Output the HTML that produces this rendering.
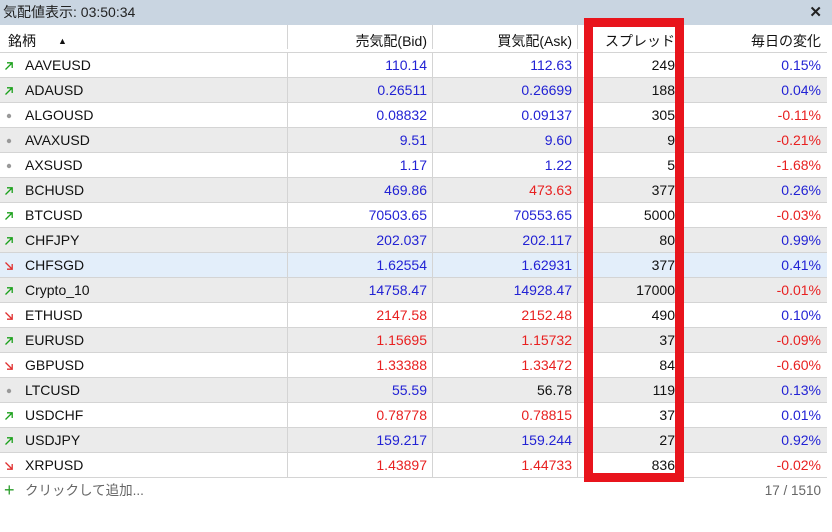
<!DOCTYPE html>
<html><head><meta charset="utf-8"><style>
*{margin:0;padding:0;box-sizing:border-box}
body{width:832px;height:532px;background:#fff;font-family:"Liberation Sans","Noto Sans CJK JP",sans-serif;font-size:14px;color:#111;position:relative;overflow:hidden}
.title{position:absolute;left:0;top:0;width:832px;height:25px;background:#c9d5e1;font-size:14px;line-height:25px;padding-left:3px;color:#222}
.x{position:absolute;right:10px;top:0;font-weight:bold;font-size:15px}
.row{position:absolute;left:0;width:827px;height:25px;border-bottom:1px solid #d4d4d4;line-height:24px}
.row.g{background:#ebebeb}
.row.h{background:#e3eefa}
.c{position:absolute;top:0;height:24px;text-align:right;border-left:1px solid #d4d4d4}
.c1{left:287px;width:145px;padding-right:5px}
.c2{left:432px;width:145px;padding-right:5px}
.c3{left:577px;width:103px;padding-right:5px}
.c4{left:680px;width:147px;padding-right:6px}
.s{position:absolute;left:25px;top:0}
.i{position:absolute;left:3px;top:0;width:12px;height:24px}
.b{color:#2222d4}.r{color:#e82020}
.hd{top:25px;height:28px;line-height:32px}
.red{position:absolute;left:584px;top:18px;width:100px;height:464px;border:9px solid #e8141c}
.foot{position:absolute;top:480px;left:0;width:832px;height:22px;line-height:22px;color:#666;font-size:13.5px}
</style></head><body>
<div class="title">気配値表示: 03:50:34<span class="x">✕</span></div>
<div class="row hd"><span class="s" style="left:8px">銘柄</span><span style="position:absolute;left:58px;top:0;font-size:9px">▲</span>
<div class="c c1">売気配(Bid)</div><div class="c c2">買気配(Ask)</div><div class="c c3">スプレッド</div><div class="c c4">毎日の変化</div></div>
<div id="rows"></div>
<div class="red"></div>
<div class="foot"><span style="color:#2a9d2a;font-size:18px;position:absolute;left:4px;top:-1px">+</span><span style="position:absolute;left:25px">クリックして追加...</span><span style="position:absolute;right:11px">17 / 1510</span></div>
<script>
var up='<svg class="i" viewBox="0 0 12 24"><path d="M2.5 16.5L9 10M4 9.8H9.2V15" stroke="#1aa01a" stroke-width="1.3" fill="none"/></svg>';
var dn='<svg class="i" viewBox="0 0 12 24"><path d="M2.5 9.5L9 16M4 16.2H9.2V11" stroke="#e03030" stroke-width="1.3" fill="none"/></svg>';
var dt='<svg class="i" viewBox="0 0 12 24"><circle cx="6" cy="13" r="2.2" fill="#999"/></svg>';
var d=[["AAVEUSD",up,"110.14","b","112.63","b","249","0.15%","b"],
["ADAUSD",up,"0.26511","b","0.26699","b","188","0.04%","b"],
["ALGOUSD",dt,"0.08832","b","0.09137","b","305","-0.11%","r"],
["AVAXUSD",dt,"9.51","b","9.60","b","9","-0.21%","r"],
["AXSUSD",dt,"1.17","b","1.22","b","5","-1.68%","r"],
["BCHUSD",up,"469.86","b","473.63","r","377","0.26%","b"],
["BTCUSD",up,"70503.65","b","70553.65","b","5000","-0.03%","r"],
["CHFJPY",up,"202.037","b","202.117","b","80","0.99%","b"],
["CHFSGD",dn,"1.62554","b","1.62931","b","377","0.41%","b"],
["Crypto_10",up,"14758.47","b","14928.47","b","17000","-0.01%","r"],
["ETHUSD",dn,"2147.58","r","2152.48","r","490","0.10%","b"],
["EURUSD",up,"1.15695","r","1.15732","r","37","-0.09%","r"],
["GBPUSD",dn,"1.33388","r","1.33472","r","84","-0.60%","r"],
["LTCUSD",dt,"55.59","b","56.78","","119","0.13%","b"],
["USDCHF",up,"0.78778","r","0.78815","r","37","0.01%","b"],
["USDJPY",up,"159.217","b","159.244","b","27","0.92%","b"],
["XRPUSD",dn,"1.43897","r","1.44733","r","836","-0.02%","r"]];
var h='';d.forEach(function(x,i){var cl=i==8?'h':(i%2?'g':'');
h+='<div class="row '+cl+'" style="top:'+(53+25*i)+'px">'+x[1]+'<span class="s">'+x[0]+'</span><div class="c c1 '+x[3]+'">'+x[2]+'</div><div class="c c2 '+x[5]+'">'+x[4]+'</div><div class="c c3">'+x[6]+'</div><div class="c c4 '+x[8]+'">'+x[7]+'</div></div>';});
document.getElementById('rows').innerHTML=h;
</script>
</body></html>
